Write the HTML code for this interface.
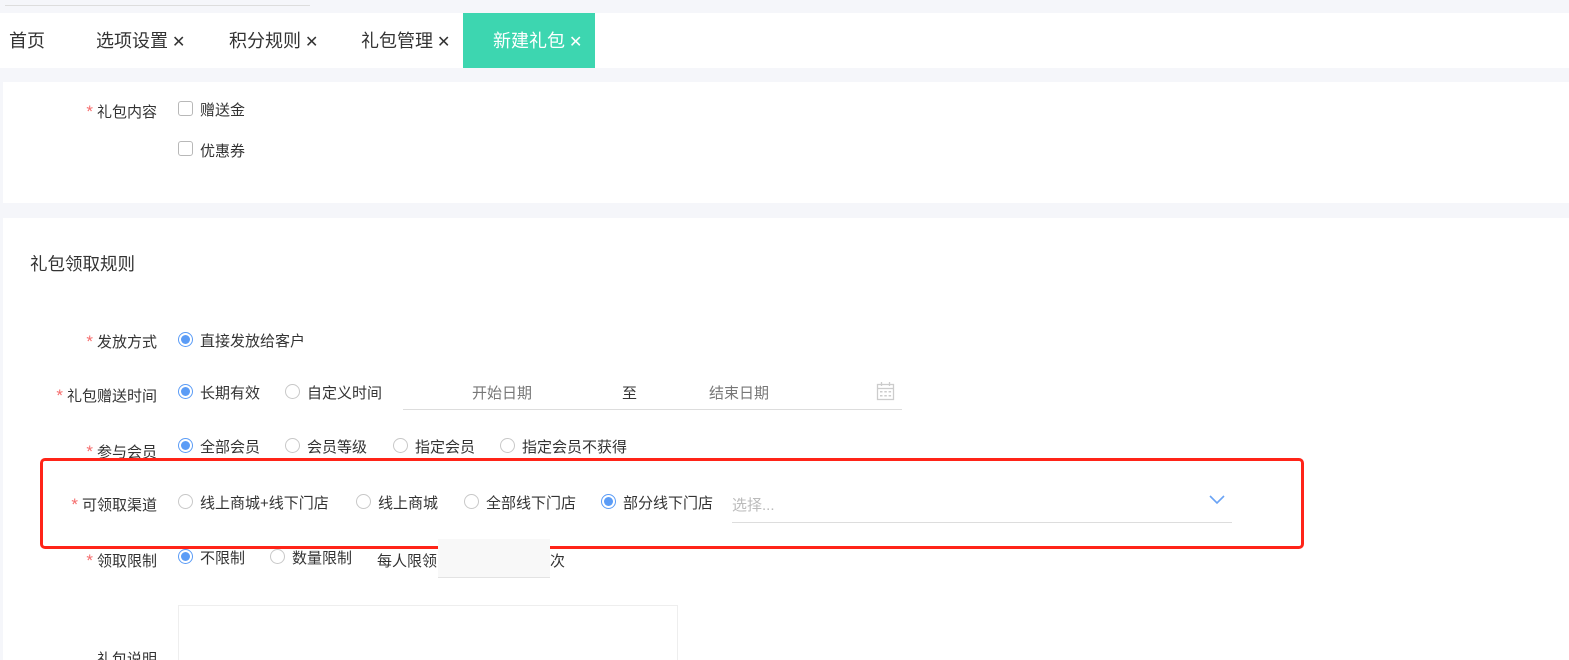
<!DOCTYPE html>
<html><head><meta charset="utf-8"><style>
*{margin:0;padding:0;box-sizing:border-box}
html,body{width:1569px;height:660px;overflow:hidden}
body{background:#f5f6fa;font-family:"Liberation Sans","Noto Sans CJK SC",sans-serif;color:#333;position:relative}
.a{position:absolute;white-space:nowrap}
.tabs{position:absolute;left:0;top:13px;width:1569px;height:55px;background:#fff}
.tab{position:absolute;top:0;height:55px;line-height:57px;font-size:18px;color:#333}
.tab .x{font-size:16px;margin-left:4px}
.card{position:absolute;left:3px;right:0;background:#fff}
.lbl{position:absolute;font-size:15px;color:#333;text-align:right;width:160px;left:-3px}
.lbl i{font-style:normal;color:#f56c6c;margin-right:4px;font-size:17px}
.r{position:absolute;width:15px;height:15px;border:1px solid #c8c8c8;border-radius:50%;background:#fff}
.r.on{border-color:#5b9cf6}
.r.on::after{content:"";position:absolute;left:2px;top:2px;width:9px;height:9px;border-radius:50%;background:#5b9cf6}
.t{position:absolute;font-size:15px;color:#333;white-space:nowrap}
.cb{position:absolute;width:15px;height:15px;border:1px solid #b8b8b8;border-radius:3px;background:#fff}
</style></head><body>
<div class="a" style="left:5px;top:5px;width:305px;height:1px;background:#ddd"></div>
<div class="tabs">
<div class="tab" style="left:9px">首页</div>
<div class="tab" style="left:96px">选项设置<span class="x">✕</span></div>
<div class="tab" style="left:229px">积分规则<span class="x">✕</span></div>
<div class="tab" style="left:361px">礼包管理<span class="x">✕</span></div>
<div class="tab" style="left:463px;width:132px;background:#3dd6b0;color:#fff;padding-left:30px">新建礼包<span class="x">✕</span></div>
</div>
<div class="card" style="top:82px;height:121px">
<div class="lbl" style="top:19px;left:-6px"><i>*</i>礼包内容</div>
<div class="cb" style="left:175px;top:19px"></div><div class="t" style="left:197px;top:17px">赠送金</div>
<div class="cb" style="left:175px;top:59px"></div><div class="t" style="left:197px;top:58px">优惠券</div>
</div>
<div class="card" style="top:218px;height:442px">
<div class="t" style="left:27px;top:33px;font-size:17.5px">礼包领取规则</div>
</div>
<div class="lbl" style="top:331px"><i>*</i>发放方式</div>
<div class="r on" style="left:178px;top:332px"></div><div class="t" style="left:200px;top:330px">直接发放给客户</div>

<div class="lbl" style="top:385px"><i>*</i>礼包赠送时间</div>
<div class="r on" style="left:178px;top:384px"></div><div class="t" style="left:200px;top:382px">长期有效</div>
<div class="r" style="left:285px;top:384px"></div><div class="t" style="left:307px;top:382px">自定义时间</div>
<div class="a" style="left:403px;top:409px;width:499px;height:1px;background:#ddd"></div>
<div class="t" style="left:472px;top:382px;color:#777">开始日期</div>
<div class="t" style="left:622px;top:382px">至</div>
<div class="t" style="left:709px;top:382px;color:#777">结束日期</div>
<svg class="a" style="left:876px;top:381px" width="19" height="20" viewBox="0 0 19 20"><g fill="none" stroke="#ccc" stroke-width="1.3"><rect x="1.5" y="3.5" width="16" height="15"/><line x1="1.5" y1="7.5" x2="17.5" y2="7.5"/><line x1="5.5" y1="1" x2="5.5" y2="5"/><line x1="13.5" y1="1" x2="13.5" y2="5"/></g><g fill="#ccc"><rect x="4" y="10" width="2.5" height="1.5"/><rect x="8.3" y="10" width="2.5" height="1.5"/><rect x="12.6" y="10" width="2.5" height="1.5"/><rect x="4" y="14" width="2.5" height="1.5"/><rect x="8.3" y="14" width="2.5" height="1.5"/><rect x="12.6" y="14" width="2.5" height="1.5"/></g></svg>

<div class="lbl" style="top:441px"><i>*</i>参与会员</div>
<div class="r on" style="left:178px;top:438px"></div><div class="t" style="left:200px;top:436px">全部会员</div>
<div class="r" style="left:285px;top:438px"></div><div class="t" style="left:307px;top:436px">会员等级</div>
<div class="r" style="left:393px;top:438px"></div><div class="t" style="left:415px;top:436px">指定会员</div>
<div class="r" style="left:500px;top:438px"></div><div class="t" style="left:522px;top:436px">指定会员不获得</div>

<div class="a" style="left:40px;top:458px;width:1264px;height:91px;border:3px solid #ff2418;border-radius:5px"></div>
<div class="lbl" style="top:494px"><i>*</i>可领取渠道</div>
<div class="r" style="left:178px;top:494px"></div><div class="t" style="left:200px;top:492px">线上商城+线下门店</div>
<div class="r" style="left:356px;top:494px"></div><div class="t" style="left:378px;top:492px">线上商城</div>
<div class="r" style="left:464px;top:494px"></div><div class="t" style="left:486px;top:492px">全部线下门店</div>
<div class="r on" style="left:601px;top:494px"></div><div class="t" style="left:623px;top:492px">部分线下门店</div>
<div class="t" style="left:732px;top:494px;color:#bbb">选择...</div>
<div class="a" style="left:732px;top:522px;width:500px;height:1px;background:#ddd"></div>
<svg class="a" style="left:1209px;top:495px" width="16" height="10" viewBox="0 0 16 10"><polyline points="1,1 8,8 15,1" fill="none" stroke="#6aa3f5" stroke-width="1.6"/></svg>

<div class="lbl" style="top:550px"><i>*</i>领取限制</div>
<div class="r on" style="left:178px;top:549px"></div><div class="t" style="left:200px;top:547px">不限制</div>
<div class="r" style="left:270px;top:549px"></div><div class="t" style="left:292px;top:547px">数量限制</div>
<div class="t" style="left:377px;top:550px">每人限领</div>
<div class="a" style="left:438px;top:539px;width:112px;height:39px;background:#f8f8f8;border-bottom:1px solid #e3e3e3"></div>
<div class="t" style="left:550px;top:550px">次</div>

<div class="a" style="left:178px;top:605px;width:500px;height:70px;border:1px solid #eee;background:#fff"></div>
<div class="lbl" style="top:648px">礼包说明</div>
</body></html>
